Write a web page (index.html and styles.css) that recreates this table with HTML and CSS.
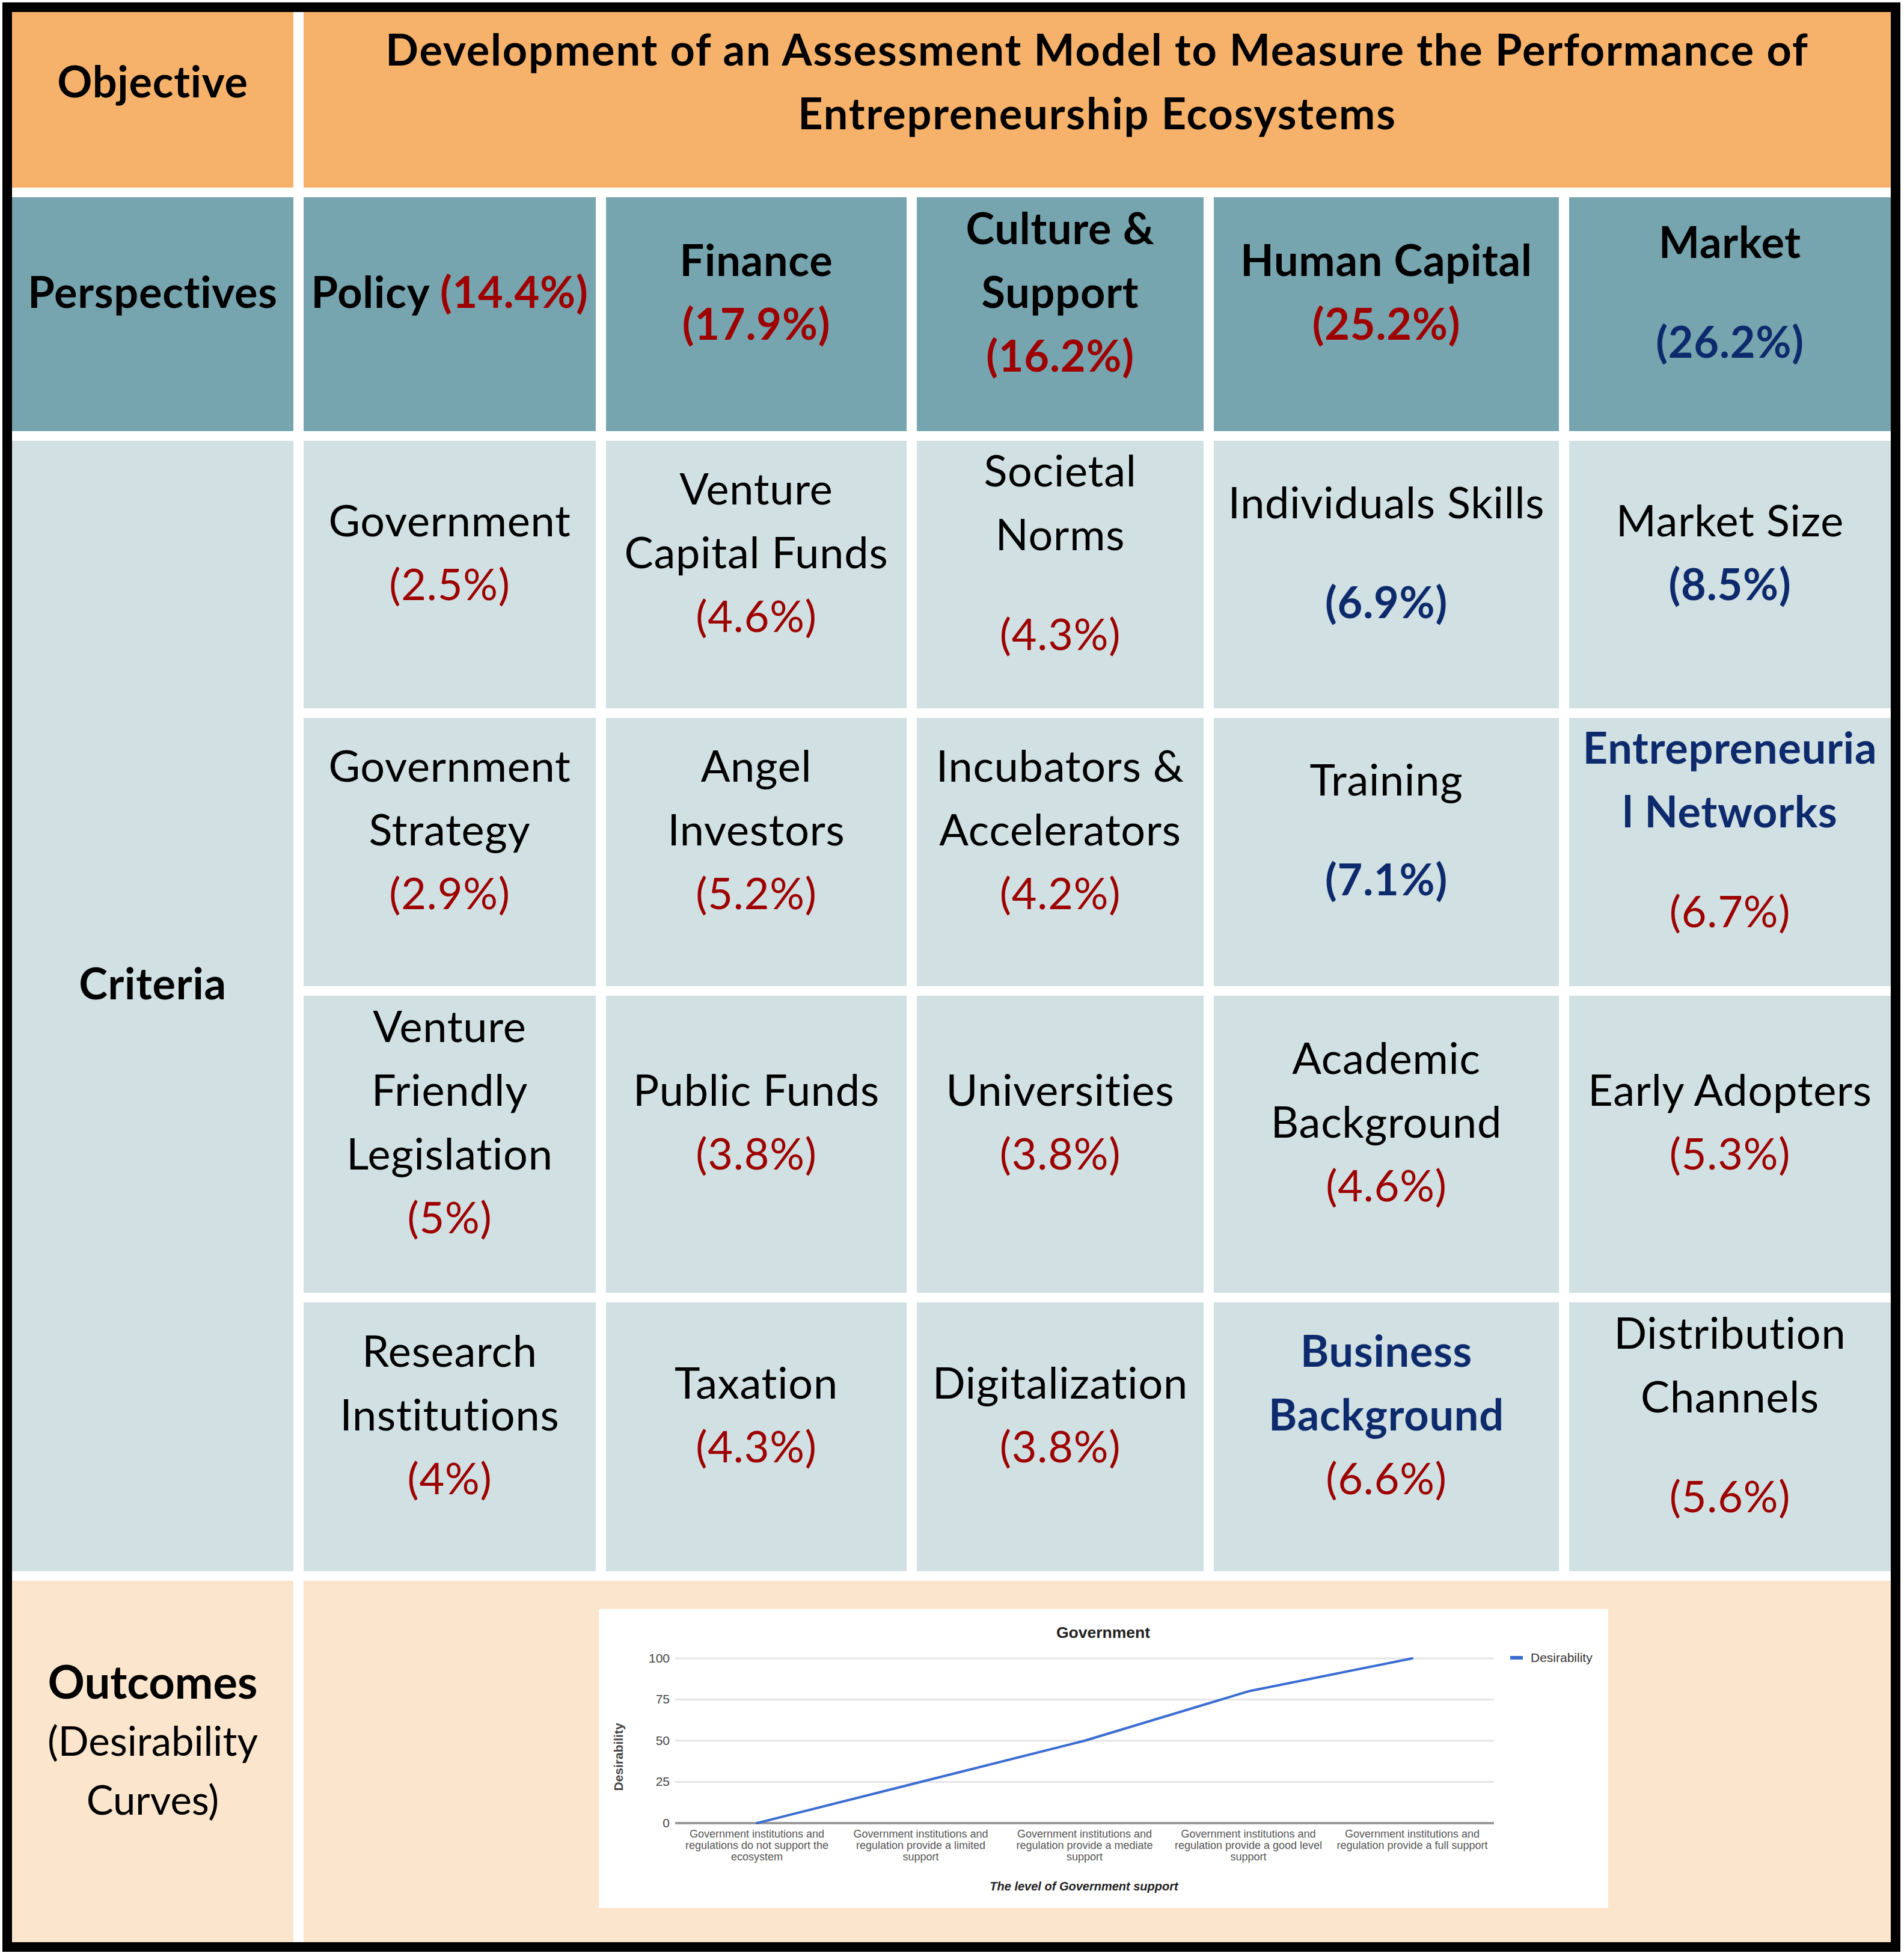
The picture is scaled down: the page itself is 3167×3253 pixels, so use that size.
FILE: index.html
```html
<!DOCTYPE html>
<html lang="en">
<head>
<meta charset="utf-8">
<title>Assessment Model of Entrepreneurship Ecosystems</title>
<link rel="stylesheet" href="styles.css">
</head>
<body>
<div class="frame">
  <!-- Row: Objective -->
  <div class="cell orange r0"><div class="l b">Objective</div></div>
  <div class="cell orange r0 wide title">
    <div class="l b">Development of an Assessment Model to Measure the Performance of</div>
    <div class="l b">Entrepreneurship Ecosystems</div>
  </div>

  <!-- Row: Perspectives -->
  <div class="cell teal"><div class="l b">Perspectives</div></div>
  <div class="cell teal"><div class="l b">Policy <span class="red">(14.4%)</span></div></div>
  <div class="cell teal"><div class="l b">Finance</div><div class="l b red">(17.9%)</div></div>
  <div class="cell teal"><div class="l b">Culture &amp;</div><div class="l b">Support</div><div class="l b red">(16.2%)</div></div>
  <div class="cell teal"><div class="l b">Human Capital</div><div class="l b red">(25.2%)</div></div>
  <div class="cell teal"><div class="l b">Market</div><div class="l navy gap">(26.2%)</div></div>

  <!-- Criteria -->
  <div class="cell light criteria"><div class="l b">Criteria</div></div>

  <div class="cell light"><div class="l">Government</div><div class="l red">(2.5%)</div></div>
  <div class="cell light"><div class="l">Venture</div><div class="l">Capital Funds</div><div class="l red">(4.6%)</div></div>
  <div class="cell light"><div class="l">Societal</div><div class="l">Norms</div><div class="l red gap">(4.3%)</div></div>
  <div class="cell light"><div class="l">Individuals Skills</div><div class="l navy gap">(6.9%)</div></div>
  <div class="cell light"><div class="l">Market Size</div><div class="l navy">(8.5%)</div></div>

  <div class="cell light"><div class="l">Government</div><div class="l">Strategy</div><div class="l red">(2.9%)</div></div>
  <div class="cell light"><div class="l">Angel</div><div class="l">Investors</div><div class="l red">(5.2%)</div></div>
  <div class="cell light"><div class="l">Incubators &amp;</div><div class="l">Accelerators</div><div class="l red">(4.2%)</div></div>
  <div class="cell light"><div class="l">Training</div><div class="l navy gap">(7.1%)</div></div>
  <div class="cell light"><div class="l navy">Entrepreneuria</div><div class="l navy">l Networks</div><div class="l red gap">(6.7%)</div></div>

  <div class="cell light"><div class="l">Venture</div><div class="l">Friendly</div><div class="l">Legislation</div><div class="l red">(5%)</div></div>
  <div class="cell light"><div class="l">Public Funds</div><div class="l red">(3.8%)</div></div>
  <div class="cell light"><div class="l">Universities</div><div class="l red">(3.8%)</div></div>
  <div class="cell light"><div class="l">Academic</div><div class="l">Background</div><div class="l red">(4.6%)</div></div>
  <div class="cell light"><div class="l">Early Adopters</div><div class="l red">(5.3%)</div></div>

  <div class="cell light"><div class="l">Research</div><div class="l">Institutions</div><div class="l red">(4%)</div></div>
  <div class="cell light"><div class="l">Taxation</div><div class="l red">(4.3%)</div></div>
  <div class="cell light"><div class="l">Digitalization</div><div class="l red">(3.8%)</div></div>
  <div class="cell light"><div class="l navy">Business</div><div class="l navy">Background</div><div class="l red">(6.6%)</div></div>
  <div class="cell light"><div class="l">Distribution</div><div class="l">Channels</div><div class="l red gap">(5.6%)</div></div>

  <!-- Outcomes -->
  <div class="cell peach outcomes">
    <div class="lo b big">Outcomes</div>
    <div class="lo">(Desirability</div>
    <div class="lo">Curves)</div>
  </div>
  <div class="cell peach wide chart-cell">
    <svg class="chart" width="1679" height="497" viewBox="0 0 1679 497" xmlns="http://www.w3.org/2000/svg">
      <rect x="0" y="0" width="1679" height="497" fill="#ffffff"/>
      <text class="ct-title" x="839" y="48" text-anchor="middle">Government</text>
      <g stroke="#e6e6e6" stroke-width="3">
        <line x1="127" y1="82" x2="1489" y2="82"/>
        <line x1="127" y1="150.5" x2="1489" y2="150.5"/>
        <line x1="127" y1="219" x2="1489" y2="219"/>
        <line x1="127" y1="287.5" x2="1489" y2="287.5"/>
      </g>
      <line x1="127" y1="356" x2="1489" y2="356" stroke="#9a9a9a" stroke-width="4"/>
      <g class="ct-ylab" text-anchor="end">
        <text x="118" y="89">100</text>
        <text x="118" y="157">75</text>
        <text x="118" y="226">50</text>
        <text x="118" y="294">25</text>
        <text x="118" y="363">0</text>
      </g>
      <text class="ct-ytitle" x="33" y="253" text-anchor="middle" transform="rotate(-90 33 246)">Desirability</text>
      <polyline points="263,356 535.5,287.5 808,219 1080.5,136.8 1353,82" fill="none" stroke="#3a6cd2" stroke-width="4" stroke-linejoin="round" stroke-linecap="round"/>
      <g class="ct-xlab" text-anchor="middle">
        <text x="263" y="380">Government institutions and</text>
        <text x="263" y="399">regulations do not support the</text>
        <text x="263" y="418">ecosystem</text>
        <text x="535.5" y="380">Government institutions and</text>
        <text x="535.5" y="399">regulation provide a limited</text>
        <text x="535.5" y="418">support</text>
        <text x="808" y="380">Government institutions and</text>
        <text x="808" y="399">regulation provide a mediate</text>
        <text x="808" y="418">support</text>
        <text x="1080.5" y="380">Government institutions and</text>
        <text x="1080.5" y="399">regulation provide a good level</text>
        <text x="1080.5" y="418">support</text>
        <text x="1353" y="380">Government institutions and</text>
        <text x="1353" y="399">regulation provide a full support</text>
      </g>
      <text class="ct-xtitle" x="807" y="468" text-anchor="middle">The level of Government support</text>
      <rect x="1516" y="78" width="21" height="6" fill="#3a6cd2"/>
      <text class="ct-legend" x="1550" y="88">Desirability</text>
    </svg>
  </div>
</div>
</body>
</html>
```

FILE: styles.css
```css
html, body {
  margin: 0;
  padding: 0;
  background: #ffffff;
}

.frame {
  margin: 4px 0 0 4px;
  width: 3125px;
  border: 16px solid #000000;
  display: grid;
  grid-template-columns: 468px 486px 500px 477px 574px 535px;
  grid-template-rows: 292px 389px 445px 446px 494px 447px 601px;
  gap: 16px 17px;
  background: #ffffff;
  font-family: Lato, "Open Sans", "Liberation Sans", sans-serif;
  font-size: 72px;
  color: #000000;
}

.cell {
  display: flex;
  flex-direction: column;
  align-items: center;
  justify-content: center;
  text-align: center;
  padding-bottom: 78px;
  box-sizing: border-box;
  min-width: 0;
}

.r0 { padding-bottom: 64px; }
.wide { grid-column: span 5; }
.criteria { grid-row: span 4; }

.orange { background: #f6b26b; }
.teal { background: #76a5af; }
.light { background: #d0e0e3; }
.peach { background: #fce5cd; }

.l {
  line-height: 106px;
  white-space: nowrap;
  letter-spacing: 0.8px;
}

.title .l { letter-spacing: 1.9px; }

.b { font-weight: 700; }
.red { color: #9e0000; }
.navy { color: #0d2a6c; font-weight: 700; }
.gap { margin-top: 60px; }

.outcomes { padding-bottom: 72px; }
.lo {
  line-height: 98px;
  white-space: nowrap;
  font-size: 67px;
}
.big { font-size: 76px; }

.chart-cell {
  padding: 0 0 10px 20px;
}

.chart {
  display: block;
  font-family: "Liberation Sans", Arial, sans-serif;
}

.ct-title { font-size: 26.5px; font-weight: 700; fill: #222222; }
.ct-ylab { font-size: 21px; fill: #444444; }
.ct-ytitle { font-size: 21px; font-weight: 700; fill: #444444; }
.ct-xlab { font-size: 18px; fill: #555555; }
.ct-xtitle { font-size: 20px; font-weight: 700; font-style: italic; fill: #222222; }
.ct-legend { font-size: 21px; fill: #333333; }
```
